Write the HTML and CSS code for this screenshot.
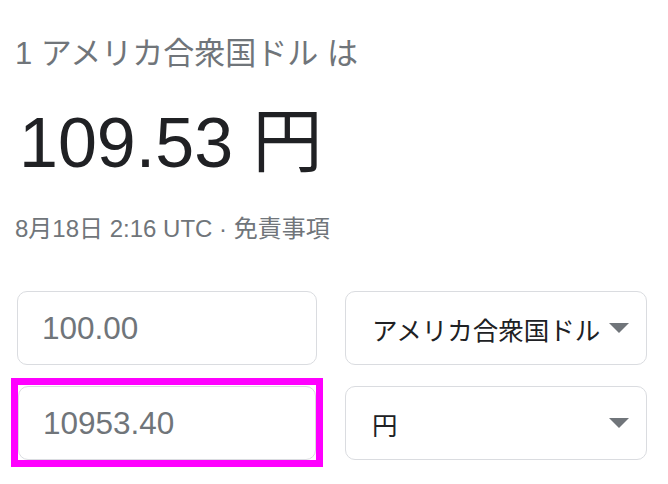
FILE: index.html
```html
<!DOCTYPE html>
<html lang="ja">
<head>
<meta charset="utf-8">
<title>通貨換算</title>
<link rel="stylesheet" href="styles.css">
</head>
<body>
<div class="card">
  <div class="title">1 アメリカ合衆国ドル は</div>
  <div class="rate">109.53 円</div>
  <div class="date">8月18日 2:16 UTC · 免責事項</div>
  <div class="grid">
    <div class="field">100.00</div>
    <div class="select"><span>アメリカ合衆国ドル</span><svg class="caret" width="20" height="10" viewBox="0 0 20 10"><path d="M0 0H20L10 10Z"/></svg></div>
    <div class="highlight"><div class="field">10953.40</div></div>
    <div class="select"><span>円</span><svg class="caret" width="20" height="10" viewBox="0 0 20 10"><path d="M0 0H20L10 10Z"/></svg></div>
  </div>
</div>
</body>
</html>
```
FILE: styles.css
```css
html, body {
  margin: 0;
  padding: 0;
  background: #fff;
}
body {
  font-family: "Liberation Sans", "Noto Sans CJK JP", sans-serif;
  min-height: 484px;
}
.card {
  padding: 35px 0 24px 15px;
}
.title {
  font-size: 31px;
  line-height: 38px;
  color: #70757a;
}
.rate {
  margin-top: 30px;
  font-size: 70px;
  line-height: 80px;
  color: #202124;
  padding-left: 4px;
}
.date {
  margin-top: 31px;
  font-size: 24px;
  line-height: 30px;
  color: #70757a;
}
.grid {
  margin-top: 47px;
  margin-left: 2px;
  display: grid;
  grid-template-columns: 300px 302px;
  grid-auto-rows: 74px;
  column-gap: 28px;
  row-gap: 21px;
}
.field, .select {
  box-sizing: border-box;
  height: 74px;
  border: 1px solid #dadce0;
  border-radius: 10px;
  display: flex;
  align-items: center;
}
.field {
  padding-left: 24px;
  font-size: 31.5px;
  color: #70757a;
}
.select {
  padding: 0 17px 0 26px;
  justify-content: space-between;
  font-size: 25.5px;
  color: #202124;
}
.caret {
  fill: #70757a;
  display: block;
}
.highlight {
  margin: -8px -6px -7px -6px;
  border: 7px solid #ff00ff;
  padding: 1px 1px 0 1px;
  background: #fff;
}
.highlight .field {
  margin: 0 -1px 0 -1px;
}
```
